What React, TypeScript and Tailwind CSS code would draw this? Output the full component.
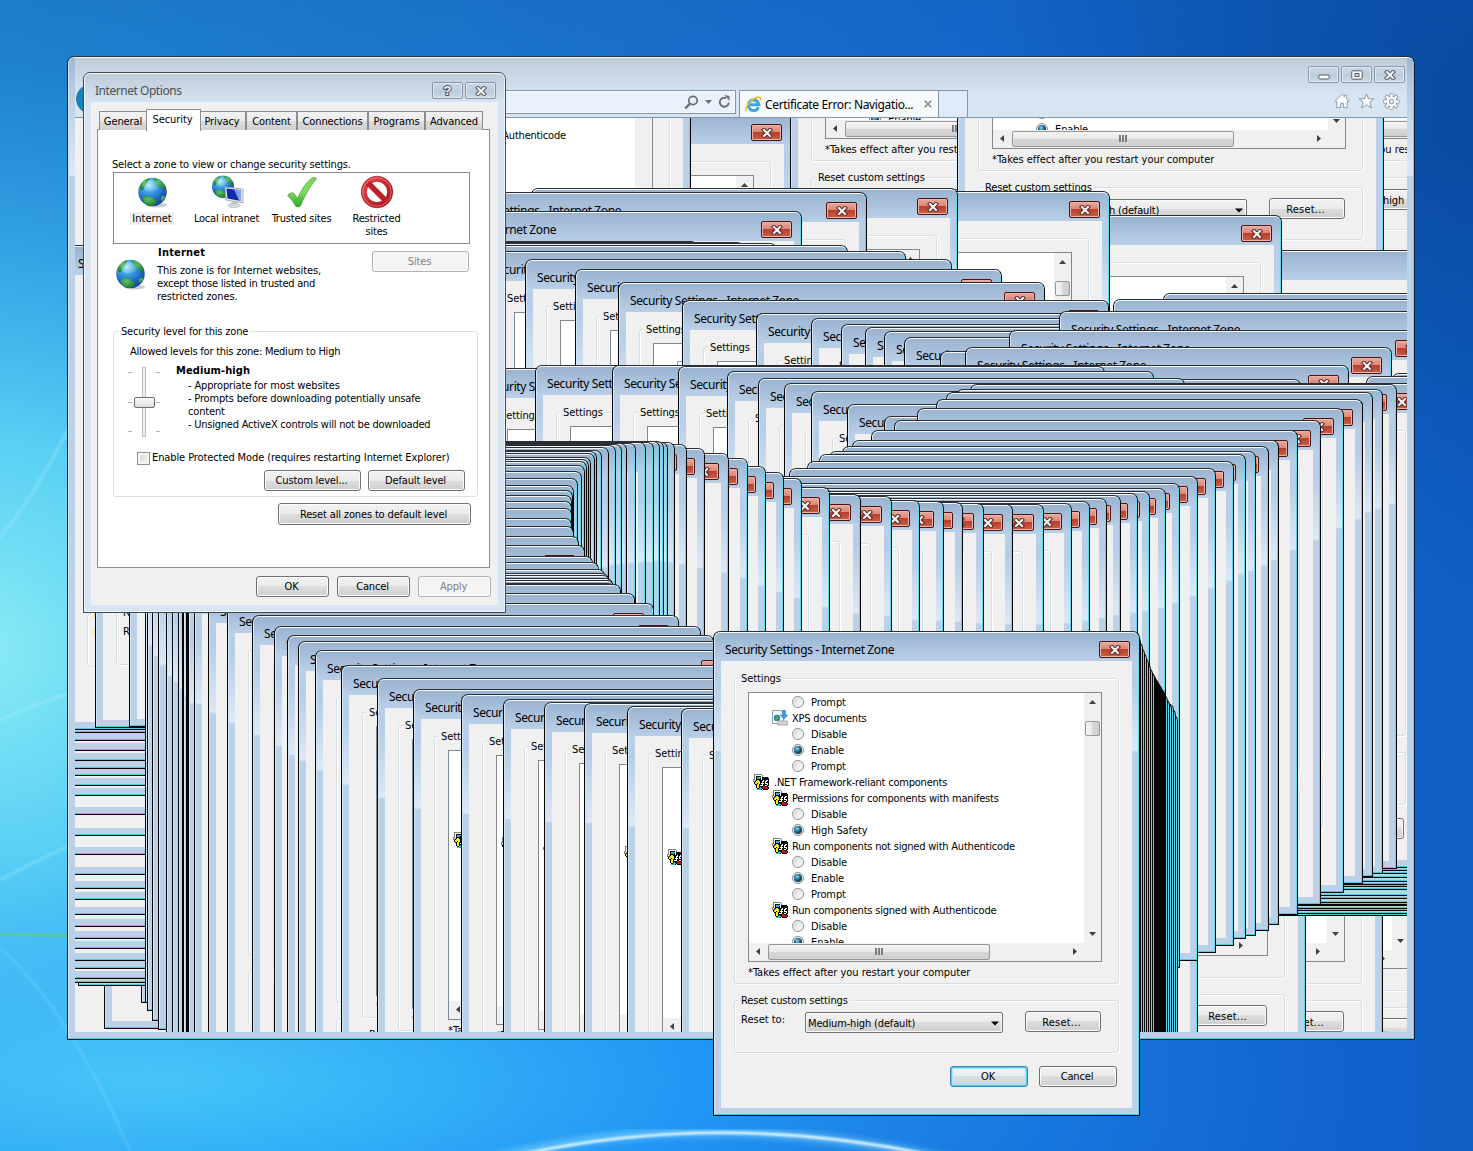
import React, { memo } from "react";

/* ------------------------------------------------------------------ */
/* Ghost copies of the dialog, oldest first                            */
/* ------------------------------------------------------------------ */

type Point = [number, number];

const early: Point[] = [
  [1246, -192], [365, 114], [790, -192], [957, -182], [264, -80],
  [1030, 250], [855, 215], [683, 191], [531, 188], [440, 192], [375, 211],
  [1021, 638], [956, 631], [879, 625], [771, 608],
  [104, 544], [141, 518], [78, 501],
];

const leftClimb: Point[] = [
  [60, 498], [58, 494], [52, 484], [48, 476], [44, 464], [40, 454], [38, 442],
  [36, 430], [34, 415], [34, 404], [34, 390], [34, 370], [34, 351], [36, 330],
  [38, 311], [40, 301], [44, 291], [48, 284], [52, 276], [56, 266], [60, 256],
  [64, 248], [66, 245],
];

const upperSweep: Point[] = [
  [95, 243], [129, 242], [271, 241], [317, 242], [350, 243], [421, 245],
  [479, 251], [525, 259], [575, 269], [618, 282], [682, 300], [756, 313],
  [811, 318], [841, 324], [865, 327], [884, 331], [904, 337], [940, 351],
  [1163, 293], [1113, 299], [1059, 311], [1009, 330], [965, 347], [922, 365],
  [874, 379], [472, 368], [535, 365], [612, 365], [678, 366], [727, 371],
  [758, 378], [784, 383], [811, 391], [847, 404], [884, 416],
];

const farRight: Point[] = [
  [1010, 431], [1040, 429], [1070, 426], [1090, 424], [1110, 421], [1120, 420],
  [1130, 418], [1140, 414], [1150, 411], [1160, 405], [1160, 402], [1150, 400],
  [1140, 397], [1120, 393], [1100, 389], [1392, 373], [1366, 376], [1040, 386],
  [1000, 383],
];

const mainSweep: Point[] = [
  [970, 384], [956, 389], [946, 392], [936, 399], [917, 408], [894, 420],
  [871, 430], [852, 440], [842, 446], [829, 451], [819, 454], [807, 461],
  [789, 468], [771, 476], [753, 483], [739, 488], [723, 491], [711, 493],
  [694, 495], [680, 498], [663, 501], [645, 503], [617, 504], [586, 504],
  [557, 503], [536, 502], [517, 501], [493, 500], [465, 496], [434, 494],
  [403, 487], [375, 478], [357, 472], [339, 466], [321, 458], [302, 453],
  [278, 448], [260, 444], [248, 442], [241, 442], [237, 441], [233, 441],
  [227, 442], [219, 442], [209, 443], [200, 443], [195, 444], [189, 445],
  [182, 447], [175, 450], [170, 451], [168, 453], [164, 457], [162, 459],
  [160, 461], [158, 465], [155, 471], [151, 478], [147, 485], [146, 490],
  [145, 495], [145, 501], [145, 508], [145, 518], [147, 526], [152, 536],
  [158, 545], [166, 556], [172, 562], [178, 569], [182, 573], [183, 575],
  [186, 578], [187, 580], [188, 583], [194, 584], [208, 593], [227, 603],
  [252, 615], [274, 626], [287, 635], [298, 641], [315, 650], [341, 665],
  [377, 678], [413, 689], [461, 694], [503, 699], [544, 702], [584, 703],
  [627, 706], [681, 708], [735, 714],
];

const lastPull: Point[] = [
  [751, 714], [749, 708], [747, 703], [745, 702], [743, 698], [741, 694],
  [739, 690], [738, 688], [737, 687], [736, 685], [735, 683], [734, 682],
  [733, 680], [732, 678], [731, 677], [730, 675], [729, 673], [728, 671],
  [726, 667], [724, 662], [722, 657], [720, 652], [718, 647], [716, 641],
  [714, 635],
];

const ghosts: Point[] = [
  ...early, ...leftClimb, ...upperSweep, ...farRight, ...mainSweep, ...lastPull,
];

const WIN_W = 427;
const WIN_H = 485;
const front: Point = [713, 631];

/** Tells whether any part of a region of ghost `index` is left uncovered. */
function isExposed(index: number, dx: number, dy: number, w: number, h: number) {
  const [x, y] = ghosts[index];
  const over = [...ghosts.slice(index + 1), front];
  for (let py = y + dy; py < y + dy + h; py += 2) {
    if (py < 118 || py > 1031) continue;
    for (let px = x + dx; px < x + dx + w; px += 2) {
      if (px < 75 || px > 1406) continue;
      if (px >= 83 && px < 506 && py >= 72 && py < 613) continue;
      const hidden = over.some(
        ([ox, oy]) => px >= ox && px < ox + WIN_W && py >= oy + 1 && py < oy + WIN_H,
      );
      if (!hidden) return true;
    }
  }
  return false;
}

/* ------------------------------------------------------------------ */
/* Small controls                                                      */
/* ------------------------------------------------------------------ */

function Button({ children, className = "", variant = "normal" }: {
  children: React.ReactNode;
  className?: string;
  variant?: "normal" | "default" | "disabled";
}) {
  const look = {
    normal: "border-[#707070] text-black bg-[linear-gradient(#f2f2f2,#ebebeb_50%,#dddddd_50%,#cfcfcf)] shadow-[inset_0_0_0_1px_#fcfcfc]",
    default: "border-[#3c7fb1] text-black bg-[linear-gradient(#f0f4f6,#e6edf1_50%,#d6dee3_50%,#ccd6dc)] shadow-[inset_0_0_0_1px_#4fcdf3,inset_0_0_0_2px_#a9e3f7]",
    disabled: "border-[#adb2b5] text-[#838383] bg-[#f4f4f4] shadow-[inset_0_0_0_1px_#fcfcfc]",
  }[variant];
  return (
    <div className={`flex shrink-0 items-center justify-center rounded-[3px] border pr-[2px] ${look} ${className}`}>
      {children}
    </div>
  );
}

function CloseGlyph({ stroke = "#5b2320" }: { stroke?: string }) {
  return (
    <svg width="12" height="10" viewBox="0 0 12 10">
      <path d="M3 2 9 8M9 2 3 8" stroke={stroke} strokeWidth="4.200" strokeLinecap="square" />
      <path d="M3 2 9 8M9 2 3 8" stroke="#f6f6f6" strokeWidth="2.200" strokeLinecap="square" />
    </svg>
  );
}

function Arrow({ dir }: { dir: "up" | "down" | "left" | "right" }) {
  const d = {
    up: "M0 5 3.5 1 7 5Z",
    down: "M0 1 3.5 5 7 1Z",
    left: "M5 0 1 3.5 5 7Z",
    right: "M1 0 5 3.5 1 7Z",
  }[dir];
  return (
    <svg width="7" height="7" viewBox="0 0 7 7">
      <path d={d} fill="#404040" />
    </svg>
  );
}

function Radio({ on }: { on?: boolean }) {
  return (
    <span className="flex h-[12px] w-[12px] shrink-0 items-center justify-center rounded-full border border-[#8e8f8f] bg-[linear-gradient(135deg,#cfd2d4,#f6f6f6_70%)] shadow-[inset_0_0_0_1px_#f4f4f4]">
      {on && <span className="h-[8px] w-[8px] rounded-full bg-[radial-gradient(circle_at_40%_35%,#9bdcf3,#1f6d98_38%,#0b2c46_75%)]" />}
    </span>
  );
}

const netPixels = [
  ".gggggggg.......",
  ".gwwwwwwwg......",
  ".gwkkkkkwg......",
  ".gwkttttwkkkkkk.",
  ".gwktttkwkkkkkkk",
  "ggwkkkkkwkkkkkkk",
  "gwgkyykkkkwkkwwk",
  "ggkyyyykkwwkwwkk",
  ".kyyyyykkwkkwkkk",
  ".kyykyykwwwkwwwk",
  "..kkyykkkwkkkkwk",
  "...kyykwwwkkwwkk",
  "...kyykkkkrrkkk.",
  "...kyyktkkrrrrrk",
  "....kktttkrrrrrk",
  "....ttttk.kkkkk.",
];

const netColors: Record<string, string> = {
  g: "#808080", w: "#ffffff", k: "#000000", t: "#22c4c4", y: "#f2ea1e", r: "#c41414",
};

const netPaths = Object.keys(netColors).map((key) => ({
  fill: netColors[key],
  d: netPixels
    .flatMap((line, y) => [...line].map((c, x) => (c === key ? `M${x} ${y}h1v1h-1z` : "")))
    .join(""),
}));

function NetIcon() {
  return (
    <svg width="16" height="16" viewBox="0 0 16 16" shapeRendering="crispEdges" className="shrink-0">
      {netPaths.map((p) => (
        <path key={p.fill} d={p.d} fill={p.fill} />
      ))}
    </svg>
  );
}

function XpsIcon() {
  return (
    <svg width="16" height="16" viewBox="0 0 16 16" className="shrink-0">
      <path d="M.5.5h8l3 3v10H.5z" fill="#f7fafc" stroke="#8fa1b0" />
      <circle cx="5" cy="8" r="3.200" fill="#2482ad" />
      <path d="M3 7.400c1-1.800 3-1.600 3.600-.6S5.400 10 4.600 10.500 3 9 3 7.400z" fill="#49b04a" />
      <path d="M10.500.5h3v4.500h2.200L12 9.200 8.300 5h2.200z" fill="#4a9bdc" stroke="#2a72b5" strokeWidth=".6" />
      <path d="M6 12.500 8 11h7l1 1.500V15H6z" fill="#d5d9dc" stroke="#858b90" strokeWidth=".7" />
    </svg>
  );
}

/* ------------------------------------------------------------------ */
/* Security Settings dialog                                            */
/* ------------------------------------------------------------------ */

type Row = { kind: "root" | "item" | "radio"; label: string; on?: boolean; xps?: boolean };

const rows: Row[] = [
  { kind: "radio", label: "Prompt" },
  { kind: "item", label: "XPS documents", xps: true },
  { kind: "radio", label: "Disable" },
  { kind: "radio", label: "Enable", on: true },
  { kind: "radio", label: "Prompt" },
  { kind: "root", label: ".NET Framework-reliant components" },
  { kind: "item", label: "Permissions for components with manifests" },
  { kind: "radio", label: "Disable" },
  { kind: "radio", label: "High Safety", on: true },
  { kind: "item", label: "Run components not signed with Authenticode" },
  { kind: "radio", label: "Disable" },
  { kind: "radio", label: "Enable", on: true },
  { kind: "radio", label: "Prompt" },
  { kind: "item", label: "Run components signed with Authenticode" },
  { kind: "radio", label: "Disable" },
  { kind: "radio", label: "Enable", on: true },
];

const rowStart = { root: 62, item: 79, radio: 98 };
const rowWidth = { root: 174, item: 224, radio: 57 };

function SettingRow({ row, showLabel }: { row: Row; showLabel: boolean }) {
  const label = showLabel && <span>{row.label}</span>;
  if (row.kind === "radio")
    return (
      <div className="flex h-4 shrink-0 items-center gap-[7px] pl-[43px] tracking-[-0.1px]">
        <Radio on={row.on} />
        {label}
      </div>
    );
  return (
    <div className={`flex h-4 shrink-0 items-center tracking-[-0.21px] ${row.kind === "root" ? "gap-[5px] pl-[4px]" : "gap-[4px] pl-[23px]"}`}>
      {row.xps ? <XpsIcon /> : <NetIcon />}
      {label}
    </div>
  );
}

type Seen = (dx: number, dy: number, w: number, h: number) => boolean;

function SettingsList({ seen }: { seen: Seen }) {
  return (
    <div className="ml-[13px] flex h-[270px] w-[354px] flex-col border border-[#828790] bg-white">
      <div className="flex h-[250px]">
        <div className="flex h-[250px] w-[335px] flex-col overflow-hidden pt-px">
          {rows.map((r, i) => (
            <SettingRow key={i} row={r} showLabel={seen(rowStart[r.kind], 65 + 16 * i, rowWidth[r.kind], i === 15 ? 8 : 12)} />
          ))}
        </div>
        <div className="flex h-[250px] w-[17px] flex-col items-center bg-[#f0f0f0] pt-[6px] pb-[5px]">
          <Arrow dir="up" />
          <div className="mt-[15px] -ml-px h-[15px] w-[15px] rounded-[2px] border border-[#979797] bg-[linear-gradient(90deg,#f3f3f3,#e9e9eb_50%,#d7d7d9_50%,#cfcfd1)]" />
          <div className="grow" />
          <Arrow dir="down" />
        </div>
      </div>
      <div className="flex h-[18px] items-center bg-[#f0f0f0] pb-px pl-[6px]">
        <Arrow dir="left" />
        <div className="ml-[6px] flex h-[16px] w-[222px] items-center justify-center gap-px rounded-[2px] border border-[#979797] bg-[linear-gradient(#f3f3f3,#e9e9eb_50%,#d7d7d9_50%,#cfcfd1)]">
          <span className="h-[7px] w-[2px] bg-[#7d7d7d]" />
          <span className="h-[7px] w-[2px] bg-[#7d7d7d]" />
          <span className="h-[7px] w-[2px] bg-[#7d7d7d]" />
        </div>
        <div className="w-[82px]" />
        <Arrow dir="right" />
      </div>
    </div>
  );
}

const alwaysSeen: Seen = () => true;

const SecurityWindow = memo(function SecurityWindow({ x, y, index }: { x: number; y: number; index?: number }) {
  const seen: Seen =
    index === undefined ? alwaysSeen : (dx, dy, w, h) => isExposed(index, dx, dy, w, h);
  return (
    <div
      className="absolute h-[485px] w-[427px] overflow-hidden rounded-t-[7px] rounded-b-[1px] border border-[#050505] border-t-[#2b2f33]"
      style={{ left: x, top: y }}
    >
      <div className="flex h-full flex-col rounded-t-[6px] border border-t-[#f0f6fb] border-r-[#5fd6f2] border-b-[#54c6d8] border-l-[#d5e5f3] bg-[#bad1e8] bg-[linear-gradient(#9ab4d0,#b9cfe8_28px,#b5cde7_50px,#dce9f6_117px,#bad1e8_119px)] px-[6px] pb-[6px]">
        <div className="flex h-[28px] shrink-0 items-start justify-between pl-[4px]">
          <span className="pt-[7px] font-[Noto_Sans,sans-serif] text-[12px] leading-[20px] tracking-[-0.37px] whitespace-nowrap text-black">
            {seen(12, 11, 170, 14) && "Security Settings - Internet Zone"}
          </span>
          <div className="mt-[8px] mr-[2px] flex h-[17px] w-[31px] items-center justify-center rounded-[2px] border border-[#4d1512] bg-[linear-gradient(#e9a99d,#d98677_48%,#b8402b_50%,#c9604c)] shadow-[inset_0_0_0_1px_#eab4aa]">
            <CloseGlyph />
          </div>
        </div>
        <div className="flex h-[447px] flex-col bg-[#f0f0f0] px-[13px] pt-[17px]">
          <div className="h-[306px] rounded-[3px] border border-[#d5dfe5] shadow-[inset_1px_1px_0_#fff,1px_1px_0_#fff]">
            <div className="-mt-[7px] ml-[4px] h-[14px] w-fit bg-[#f0f0f0] px-[2px] leading-[14px] tracking-[-0.1px]">
              {seen(28, 41, 40, 12) && "Settings"}
            </div>
            <div className="h-[6px]" />
            <SettingsList seen={seen} />
            <div className="mt-[4px] ml-[13px] h-[14px] leading-[14px] tracking-[-0.03px]">
              {seen(35, 335, 222, 12) && "*Takes effect after you restart your computer"}
            </div>
          </div>
          <div className="mt-[16px] h-[53px] rounded-[3px] border border-[#d5dfe5] shadow-[inset_1px_1px_0_#fff,1px_1px_0_#fff]">
            <div className="-mt-[7px] ml-[4px] h-[14px] w-fit bg-[#f0f0f0] px-[2px] leading-[14px]">
              {seen(28, 363, 107, 12) && "Reset custom settings"}
            </div>
            <div className="flex items-start pt-[3px] pl-[6px]">
              <span className="w-[64px] pt-[2px] leading-[14px] tracking-normal">{seen(28, 382, 45, 12) && "Reset to:"}</span>
              <div className="mt-px flex h-[21px] w-[198px] items-center justify-between rounded-[2px] border border-[#707070] bg-[linear-gradient(#f2f2f2,#ebebeb_50%,#dddddd_50%,#cfcfcf)] pt-px pr-[3px] pl-[2px] shadow-[inset_0_0_0_1px_#fcfcfc]">
                <span>{seen(94, 385, 110, 12) && "Medium-high (default)"}</span>
                <svg width="8" height="5" viewBox="0 0 8 5">
                  <path d="M0 .5h8L4 4.500z" fill="#000" />
                </svg>
              </div>
              <Button className="ml-[22px] h-[21px] w-[76px]">
                <span className="mt-px -ml-px tracking-[0.2px]">{seen(325, 385, 50, 12) && "Reset..."}</span>
              </Button>
            </div>
          </div>
          <div className="mt-[13px] flex justify-end gap-[11px] pr-[2px]">
            <Button variant="default" className="h-[21px] w-[78px]">{seen(265, 438, 25, 12) && "OK"}</Button>
            <Button className="h-[21px] w-[78px]">{seen(345, 438, 40, 12) && "Cancel"}</Button>
          </div>
        </div>
      </div>
    </div>
  );
});

/* ------------------------------------------------------------------ */
/* Internet Options dialog                                             */
/* ------------------------------------------------------------------ */

function Globe({ size = 31 }: { size?: number }) {
  return (
    <svg width={size} height={size} viewBox="0 0 32 32">
      <defs>
        <radialGradient id="ball" cx=".38" cy=".25" r=".85">
          <stop offset="0" stopColor="#b6e9fb" />
          <stop offset=".3" stopColor="#3fa4e4" />
          <stop offset=".7" stopColor="#1a5cba" />
          <stop offset="1" stopColor="#143f90" />
        </radialGradient>
        <radialGradient id="land" cx=".4" cy=".3" r=".8">
          <stop offset="0" stopColor="#5cc45e" />
          <stop offset="1" stopColor="#17702e" />
        </radialGradient>
      </defs>
      <ellipse cx="20" cy="29" rx="11" ry="2.500" fill="#000" opacity=".2" />
      <circle cx="16" cy="15.500" r="14.700" fill="url(#ball)" />
      <path d="M3 9C5 4.500 9 2 12.500 1.300c.8 1-.6 1.700-.9 2.900S8.800 7 8 8.700s-.3 4-2.300 4.800S2.500 11.500 3 9z" fill="url(#land)" />
      <path d="M17.500 1.500C22 1.500 27 5 29.300 9.500c1 2.800.6 5-.8 4.500s-1.700-2.500-3.800-4-3.800-.3-4.600-2.600S16 2.500 17.500 1.500z" fill="url(#land)" />
      <path d="M7 20.500c2.500-1.500 8-.5 10 1.500s4.500 2.500 3.500 4.500-3 3-5.500 3.300-6-1-7.500-3.500S5.500 21.500 7 20.500z" fill="url(#land)" />
      <path d="M26 19.500c1.500-.5 3.500 0 3.300 1s-2 4-3.500 4.500-1.800-4.500.2-5.500z" fill="url(#land)" />
      <ellipse cx="14" cy="9" rx="8" ry="6" fill="#fff" opacity=".16" />
    </svg>
  );
}

function IntranetIcon() {
  return (
    <div className="relative h-8 w-8">
      <div className="-mt-px">
        <Globe size={24} />
      </div>
      <svg width="20" height="23" viewBox="0 0 20 23" className="absolute right-[-1px] bottom-0">
        <path d="M1 2 19 4v14L2 15z" fill="#e4e7ea" stroke="#9aa3ab" strokeWidth=".8" />
        <path d="M2.500 3.500 17 5.200v10.800L3.500 13.500z" fill="#0f2ca8" />
        <path d="M10 4.300 17 5.200v10.800l-2-.4z" fill="#7ea3ec" />
        <path d="M7 17h6v3H7z" fill="#c5cacf" />
        <ellipse cx="10" cy="20.500" rx="6" ry="2" fill="#d9dcdf" stroke="#a9afb5" strokeWidth=".6" />
      </svg>
    </div>
  );
}

function CheckIcon() {
  return (
    <svg width="32" height="32" viewBox="0 0 32 32">
      <defs>
        <linearGradient id="tick" x1="0" x2="0" y1="0" y2="1">
          <stop offset="0" stopColor="#7ad95f" />
          <stop offset=".5" stopColor="#7fdc62" />
          <stop offset="1" stopColor="#2aa627" />
        </linearGradient>
      </defs>
      <path d="M1.500 19.500c1.500-2 4.500-3.200 6-2.500 1.800 1.600 2.800 3.600 4 5.500C15 14.500 20 6.500 26.500 1.800c1.500-.6 4 .4 4 1.200C23.500 10.500 18 21 14.500 30c-1.200 1.200-3.800 1.200-4.800.2C7.500 26 5 22.500 1.500 19.500z" fill="url(#tick)" stroke="#3f9e35" strokeWidth=".7" />
    </svg>
  );
}

function ForbiddenIcon() {
  return (
    <svg width="34" height="34" viewBox="0 0 34 34">
      <defs>
        <linearGradient id="ban" x1="0" x2="1" y1="0" y2="1">
          <stop offset="0" stopColor="#e2464b" />
          <stop offset="1" stopColor="#a80f18" />
        </linearGradient>
      </defs>
      <circle cx="17" cy="17" r="13" fill="none" stroke="url(#ban)" strokeWidth="5.600" />
      <path d="M8 8 26 26" stroke="#c11f27" strokeWidth="5.500" />
      <circle cx="17" cy="17" r="14.200" fill="none" stroke="#f09a9c" strokeWidth=".8" opacity=".8" />
      <circle cx="17" cy="17" r="15.800" fill="none" stroke="#96141a" strokeWidth=".6" />
    </svg>
  );
}

function Tab({ label, width }: { label: string; width: string }) {
  return (
    <div className={`flex h-[19px] items-center justify-center border border-b-0 border-[#8b8d91] bg-[linear-gradient(#f2f2f2,#ebebeb_50%,#dddddd_50%,#cfcfcf)] ${width}`}>
      {label}
    </div>
  );
}

function Zone({ icon, children, selected, width }: { icon: React.ReactNode; children: React.ReactNode; selected?: boolean; width: string }) {
  return (
    <div className={`flex flex-col items-center text-center ${width}`}>
      <div className="flex h-[36px] items-center">{icon}</div>
      <span className={`mt-[2px] px-[2px] leading-[13px] ${selected ? "bg-[#f0f0f0] tracking-normal" : "tracking-[-0.2px]"}`}>{children}</span>
    </div>
  );
}

function TickMarks() {
  return (
    <div className="flex w-[32px] justify-between">
      <span className="h-px w-[4px] bg-[#b5b7b8]" />
      <span className="h-px w-[4px] bg-[#b5b7b8]" />
    </div>
  );
}

function InternetOptions() {
  return (
    <div className="absolute top-[72px] left-[83px] h-[541px] w-[423px] overflow-hidden rounded-t-[7px] border border-[#41484f] bg-[#d7e4f2]">
      <div className="flex h-full flex-col rounded-t-[6px] border border-[#eef5fb] bg-[#d7e4f2] bg-[linear-gradient(#bfcddb,#d7e4f2_30px)] px-[6px] pb-[6px]">
        <div className="flex h-[28px] shrink-0 items-start pl-[4px]">
          <span className="grow pt-[7px] font-[Noto_Sans,sans-serif] text-[12px] leading-[20px] tracking-[-0.46px] text-[#4b5259]">Internet Options</span>
          <div className="mt-[8px] flex h-[17px] w-[31px] items-center justify-center rounded-[2px] border border-[#8494a6] bg-[linear-gradient(#c9d7e5,#bfcedd_50%,#b9c9d9_50%,#cddae7)] shadow-[inset_0_0_0_1px_#e1eaf3]">
            <span className="font-[Liberation_Sans,sans-serif] text-[13px] leading-[13px] font-bold text-[#f6f8fa] [-webkit-text-stroke:2px_#50565d] [paint-order:stroke_fill]">?</span>
          </div>
          <div className="mt-[8px] mr-[2px] ml-[2px] flex h-[17px] w-[31px] items-center justify-center rounded-[2px] border border-[#8494a6] bg-[linear-gradient(#c9d7e5,#bfcedd_50%,#b9c9d9_50%,#cddae7)] shadow-[inset_0_0_0_1px_#e1eaf3]">
            <CloseGlyph stroke="#555b63" />
          </div>
        </div>

        <div className="flex h-[503px] flex-col bg-[#f0f0f0] px-[6px] pt-[7px]">
          <div className="relative z-10 flex h-[21px] items-end pl-[2px] tracking-[-0.1px]">
            <Tab label="General" width="w-[48px]" />
            <div className="-mb-px -ml-px flex h-[22px] w-[55px] justify-center border border-b-0 border-[#8b8d91] bg-white pt-[3px] pr-[2px]">Security</div>
            <Tab label="Privacy" width="w-[46px] -ml-px pr-[2px]" />
            <Tab label="Content" width="w-[51px]" />
            <Tab label="Connections" width="w-[71px]" />
            <Tab label="Programs" width="w-[57px]" />
            <Tab label="Advanced" width="w-[58px]" />
          </div>
          <div className="-mt-px h-[439px] w-[393px] shrink-0 border border-[#8b8d91] bg-white pt-[28px] pl-[15px]">
            <div className="-ml-px h-[14px] leading-[14px] tracking-[-0.16px]">Select a zone to view or change security settings.</div>
            <div className="flex h-[72px] w-[357px] border border-[#828790] pt-px">
              <Zone icon={<Globe />} selected width="w-[76px]">Internet</Zone>
              <Zone icon={<IntranetIcon />} width="w-[73px]">Local intranet</Zone>
              <Zone icon={<CheckIcon />} width="w-[77px]">Trusted sites</Zone>
              <Zone icon={<ForbiddenIcon />} width="w-[73px]">
                Restricted
                <br />
                sites
              </Zone>
            </div>
            <div className="flex h-[60px]">
              <div className="w-[44px] pt-[15px] pl-[2px]">
                <Globe />
              </div>
              <div className="w-[215px] pt-[2px] leading-[13px]">
                <div className="h-[18px] pl-px font-bold tracking-[0.2px]">Internet</div>
                <div>
                  <span className="tracking-[-0.08px]">This zone is for Internet websites,</span>
                  <br />
                  <span className="tracking-[-0.25px]">except those listed in trusted and</span>
                  <br />
                  <span className="tracking-[-0.12px]">restricted zones.</span>
                </div>
              </div>
              <Button variant="disabled" className="mt-[7px] h-[21px] w-[97px]">Sites</Button>
            </div>

            <div className="mt-[27px] h-[166px] w-[365px] rounded-[3px] border border-[#d5dfe5]">
              <div className="-mt-[7px] ml-[5px] h-[14px] w-fit bg-white px-[2px] leading-[14px] tracking-[-0.17px]">Security level for this zone</div>
              <div className="mt-[6px] ml-[16px] h-[14px] leading-[14px] tracking-[-0.23px]">Allowed levels for this zone: Medium to High</div>
              <div className="flex pl-[14px]">
                <div className="grid w-[32px] justify-items-center pt-[8px] [&>*]:[grid-area:1/1]">
                  <div className="h-[70px] w-[4px] border border-[#c0c0c0] bg-[#e9ecec]" />
                  <div className="flex h-[65px] flex-col justify-between self-start pt-[5px]">
                    <TickMarks />
                    <TickMarks />
                    <TickMarks />
                  </div>
                  <div className="mt-[30px] h-[11px] w-[21px] rounded-[2px] border border-[#6f6f6f] bg-[linear-gradient(#fafafa,#ededed_50%,#dcdcdc)]" />
                </div>
                <div className="ml-[16px] pt-[5px] leading-[13px]">
                  <div className="h-[15px] font-bold tracking-[0.1px]">Medium-high</div>
                  <div className="pl-[12px]">
                    - Appropriate for most websites
                    <br />
                    <span className="tracking-[-0.18px]">- Prompts before downloading potentially unsafe</span>
                    <br />
                    content
                    <br />
                    <span className="tracking-[-0.23px]">- Unsigned ActiveX controls will not be downloaded</span>
                  </div>
                </div>
              </div>
              <div className="mt-[14px] flex items-center pl-[23px]">
                <span className="h-[13px] w-[13px] border border-[#8e8f8f] bg-[linear-gradient(135deg,#cfd3d6,#f4f4f4)] shadow-[inset_0_0_0_2px_#f4f4f4]" />
                <span className="ml-[2px] leading-[14px] tracking-[-0.1px]">Enable Protected Mode (requires restarting Internet Explorer)</span>
              </div>
              <div className="mt-[5px] flex gap-[7px] pl-[150px]">
                <Button className="h-[21px] w-[97px]">Custom level...</Button>
                <Button className="h-[21px] w-[97px]">Default level</Button>
              </div>
            </div>
            <Button className="mt-[6px] ml-[165px] h-[22px] w-[193px]">Reset all zones to default level</Button>
          </div>
          <div className="mt-[8px] mr-px flex justify-end gap-[8px]">
            <Button className="h-[21px] w-[73px]">OK</Button>
            <Button className="h-[21px] w-[73px]">Cancel</Button>
            <Button variant="disabled" className="h-[21px] w-[73px]">Apply</Button>
          </div>
        </div>
      </div>
    </div>
  );
}

/* ------------------------------------------------------------------ */
/* Browser window                                                      */
/* ------------------------------------------------------------------ */

function CaptionButton({ children }: { children: React.ReactNode }) {
  return (
    <div className="flex h-[17px] w-[31px] items-center justify-center rounded-[2px] border border-[#8a9aac] bg-[linear-gradient(#c9d7e5,#c3d1df_50%,#bccbdb_50%,#cddae7)] shadow-[inset_0_0_0_1px_#e1eaf3]">
      {children}
    </div>
  );
}

function BrowserIcon() {
  return (
    <svg width="17" height="17" viewBox="0 0 17 17" fill="none">
      <path d="M13.500 11.300A5.300 5.300 0 1 1 13.900 8.700H5" stroke="#3ba4dc" strokeWidth="3" />
      <path d="M1.600 15.400C-.6 13 3.500 6 8.500 3S16.500.8 15.300 4.200" stroke="#f0b92c" strokeWidth="1.600" />
    </svg>
  );
}

const gearTeeth = Array.from({ length: 8 }, (_, i) => i * 45);

function GearIcon() {
  return (
    <svg width="17" height="17" viewBox="0 0 17 17">
      {gearTeeth.map((a) => (
        <rect key={a} x="6.900" y=".6" width="3.200" height="5" rx=".6" fill="#fbfdfe" stroke="#8e98a3" transform={`rotate(${a} 8.500 8.500)`} />
      ))}
      <circle cx="8.500" cy="8.500" r="5.200" fill="#fbfdfe" stroke="#8e98a3" />
      {gearTeeth.map((a) => (
        <rect key={a} x="7.400" y="1.200" width="2.200" height="4" fill="#fbfdfe" transform={`rotate(${a} 8.500 8.500)`} />
      ))}
      <circle cx="8.500" cy="8.500" r="2.300" fill="#d7e4f1" stroke="#8e98a3" />
    </svg>
  );
}

function Browser() {
  return (
    <div className="absolute top-[56px] left-[67px] h-[984px] w-[1348px] overflow-hidden rounded-t-[7px] border border-[#10202c] border-t-[#27323c]">
      <div className="flex h-full flex-col rounded-t-[6px] border border-t-[#eef5fb] border-r-[#5fd6f2] border-b-[#54c6d8] border-l-[#d5e5f3] bg-[#bad1e8] bg-[linear-gradient(#9fb8d2,#b5cbe4_30px,#dce9f6_117px,#bad1e8_119px)] px-[6px] pb-[6px]">
        <div className="flex h-[60px] shrink-0 flex-col border-b border-[#7f96ad] bg-[linear-gradient(#bfcddb,#d7e4f1_38px,#d7e4f1)]">
          <div className="flex h-[32px] justify-end gap-[2px] pt-[8px] pr-[2px]">
            <CaptionButton>
              <svg width="12" height="12" viewBox="0 0 12 12"><rect x=".8" y="6" width="10.400" height="4" rx="1" fill="#fff" stroke="#555d66" /></svg>
            </CaptionButton>
            <CaptionButton>
              <svg width="12" height="10" viewBox="0 0 12 10"><rect x=".8" y=".8" width="10.400" height="8.400" rx="1" fill="#fff" stroke="#555d66" /><rect x="4" y="3.500" width="4" height="3" fill="#cbd7e3" stroke="#555d66" /></svg>
            </CaptionButton>
            <CaptionButton>
              <CloseGlyph stroke="#555b63" />
            </CaptionButton>
          </div>
          <div className="flex h-[27px] items-start font-[Noto_Sans,sans-serif] text-[12px]">
            <svg width="30" height="30" viewBox="0 0 30 30" className="-mt-[6px] ml-px shrink-0">
              <circle cx="15" cy="15" r="14.500" fill="#1583bd" stroke="#3c6f90" />
            </svg>
            <div className="flex h-[24px] w-[630px] items-center justify-end gap-[6px] border border-[#8495a8] bg-[#e9f1fb] pr-[4px] shadow-[inset_0_0_0_1px_#f8fbfe]">
              <svg width="15" height="15" viewBox="0 0 15 15" fill="none" stroke="#6f6f70">
                <circle cx="9" cy="5.500" r="4.200" strokeWidth="1.800" />
                <path d="M5.800 8.800 1.200 13.300" strokeWidth="2.400" />
              </svg>
              <svg width="7" height="4" viewBox="0 0 7 4"><path d="M0 0h7L3.500 4z" fill="#6f6f70" /></svg>
              <svg width="13" height="14" viewBox="0 0 13 14" fill="none" stroke="#6f6f70">
                <path d="M10.800 7.500a4.500 4.500 0 1 1-2.600-4.300" strokeWidth="1.900" />
                <path d="M6.500 0 11.500 1v5z" fill="#6f6f70" stroke="none" />
              </svg>
            </div>
            <div className="ml-[3px] flex h-[27px] w-[200px] items-center border border-b-0 border-[#8495a8] bg-[#f7fafd] pl-[5px]">
              <BrowserIcon />
              <span className="ml-[3px] w-[159px] tracking-[-0.35px] whitespace-nowrap text-black">Certificate Error: Navigatio...</span>
              <svg width="8" height="8" viewBox="0 0 9 9" className="shrink-0"><path d="M1 1 8 8M8 1 1 8" stroke="#8f9499" strokeWidth="2" /></svg>
            </div>
            <div className="-ml-px h-[27px] w-[30px] border border-b-0 border-[#8495a8] bg-[#dfebfa]" />
            <div className="mr-[7px] ml-auto flex gap-[8px] pt-[3px]">
              <svg width="16" height="16" viewBox="0 0 17 16"><path d="M8.500.8 1 8.200l1 1 1-.8V15h4v-4.500h3V15h4V8.400l1 .8 1-1L13.500 6V1.800h-2.200v2z" fill="#fbfdfe" stroke="#8e98a3" strokeWidth="1" /></svg>
              <svg width="17" height="16" viewBox="0 0 17 16"><path d="m8.500.8 2.100 5h5.500l-4.300 3.500 1.600 5.700-4.900-3.300L3.600 15l1.600-5.700L.9 5.800h5.500z" fill="#fbfdfe" stroke="#8e98a3" strokeWidth="1" /></svg>
              <GearIcon />
            </div>
          </div>
        </div>
        {/* page area, in screen coordinates */}
        <div className="relative h-[914px] w-[1332px] shrink-0 overflow-hidden bg-[#f0f0f0]">
          <div className="absolute top-[-118px] left-[-75px]">
            {ghosts.map(([x, y], i) => (
              <SecurityWindow key={i} x={x} y={y} index={i} />
            ))}
          </div>
        </div>
      </div>
    </div>
  );
}

function Desktop() {
  return (
    <svg className="absolute inset-0" width="1473" height="1151" viewBox="0 0 1473 1151">
      <defs>
        <linearGradient id="base" x1="0" y1="0" x2="1" y2="0">
          <stop offset="0" stopColor="#2a9ee6" />
          <stop offset=".35" stopColor="#2284de" />
          <stop offset=".7" stopColor="#1670d8" />
          <stop offset="1" stopColor="#0f5ec6" />
        </linearGradient>
        <radialGradient id="glow" gradientUnits="userSpaceOnUse" cx="0" cy="0" r="1" gradientTransform="translate(-20 650) scale(620 600)">
          <stop offset="0" stopColor="#8becf4" />
          <stop offset=".35" stopColor="#5fd6f6" stopOpacity=".9" />
          <stop offset="1" stopColor="#2fa6f0" stopOpacity="0" />
        </radialGradient>
        <radialGradient id="floor" gradientUnits="userSpaceOnUse" cx="0" cy="0" r="1" gradientTransform="translate(150 1080) scale(1200 330)">
          <stop offset="0" stopColor="#4accfb" />
          <stop offset=".45" stopColor="#229cf8" stopOpacity=".85" />
          <stop offset="1" stopColor="#1470dc" stopOpacity="0" />
        </radialGradient>
        <linearGradient id="shade" x1="0" y1="0" x2=".12" y2="1">
          <stop offset="0" stopColor="#08479b" stopOpacity=".38" />
          <stop offset=".5" stopColor="#0b55b0" stopOpacity="0" />
        </linearGradient>
        <radialGradient id="corner" gradientUnits="userSpaceOnUse" cx="0" cy="0" r="1" gradientTransform="translate(1480 120) scale(500 480)">
          <stop offset="0" stopColor="#063f8c" stopOpacity=".6" />
          <stop offset="1" stopColor="#063f8c" stopOpacity="0" />
        </radialGradient>
        <filter id="soft"><feGaussianBlur stdDeviation="3" /></filter>
        <filter id="fine"><feGaussianBlur stdDeviation=".8" /></filter>
      </defs>
      <rect width="1473" height="1151" fill="url(#base)" />
      <rect width="1473" height="1151" fill="url(#shade)" />
      <rect width="1473" height="1151" fill="url(#corner)" />
      <rect width="1473" height="1151" fill="url(#floor)" />
      <rect width="1473" height="1151" fill="url(#glow)" />
      <path d="M0 538Q34 496 68 430" fill="none" stroke="#c6f4fb" strokeWidth="3" opacity=".25" filter="url(#fine)" />
      <path d="M0 720Q34 704 68 694M0 880Q34 862 68 846" fill="none" stroke="#c6f4fb" strokeWidth="2" opacity=".35" filter="url(#fine)" />
      <path d="M0 934.500 68 935.500" stroke="#63cf7e" strokeWidth="3" opacity=".75" />
      <path d="M0 948Q70 1010 130 1151" fill="none" stroke="#c6f4fb" strokeWidth="2" opacity=".2" filter="url(#fine)" />
      <path d="M490 1160Q700 1104 950 1160" fill="none" stroke="#9fe4ff" strokeWidth="8" opacity=".5" filter="url(#soft)" />
      <path d="M510 1157Q720 1108 945 1158" fill="none" stroke="#e9fbff" strokeWidth="2.500" filter="url(#fine)" />
    </svg>
  );
}

export default function App() {
  return (
    <div className="relative h-[1151px] w-[1473px] overflow-hidden bg-[#1b78d6] font-[DejaVu_Sans_Condensed,DejaVu_Sans,sans-serif] text-[11px] leading-[13px] tracking-[-0.15px] whitespace-nowrap text-black">
      <Desktop />
      <Browser />
      <InternetOptions />
      <SecurityWindow x={front[0]} y={front[1]} />
    </div>
  );
}
